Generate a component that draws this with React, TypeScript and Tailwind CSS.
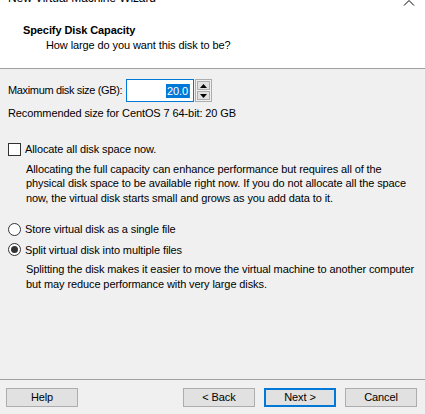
import React from 'react';

const font = "font-['Liberation_Sans','DejaVu_Sans',sans-serif]";

const WinButton = ({ label, focused }: { label: string; focused?: boolean }) => (
  <div
    className={`w-[72px] h-[19px] flex items-center justify-center bg-[#e1e1e1] text-[11px] text-black ${
      focused ? 'border-2 border-[#0078d7]' : 'border border-[#adadad]'
    }`}
  >
    {label}
  </div>
);

const Radio = ({ checked }: { checked?: boolean }) => (
  <div className="w-[13px] h-[13px] rounded-full border border-[#333] bg-white flex items-center justify-center shrink-0">
    {checked && <div className="w-[7px] h-[7px] rounded-full bg-[#333]" />}
  </div>
);

export default function App() {
  return (
    <div
      className={`w-[425px] h-[414px] bg-[#f0f0f0] flex flex-col text-[11px] tracking-[-0.1px] text-black overflow-hidden ${font}`}
    >
      {/* header */}
      <div className="bg-white h-[69px] border-b border-[#a0a0a0] flex flex-col shrink-0">
        <div className="h-[8px] flex justify-between overflow-hidden">
          <div className="pl-[8px] text-[12px] leading-[16px] mt-[-10px] whitespace-nowrap">New Virtual Machine Wizard</div>
          <svg width="12" height="8" viewBox="0 0 12 8" className="mr-[10px] mt-[-1px]">
            <path d="M1 6.5 L6 1.5 L11 6.5" stroke="#000" strokeWidth="1" fill="none" />
          </svg>
        </div>
        <div className="pl-[23px] pt-[15px] font-bold leading-[14px]">Specify Disk Capacity</div>
        <div className="pl-[46px] pt-[1px] leading-[14px]">How large do you want this disk to be?</div>
      </div>

      {/* body */}
      <div className="flex flex-col pl-[8px] pt-[10px]">
        <div className="flex items-center h-[23px]">
          <span className="w-[118px] shrink-0 whitespace-nowrap tracking-[-0.35px]">Maximum disk size (GB):</span>
          <div className="w-[68px] h-[23px] border border-[#0078d7] bg-white flex items-center justify-end pr-[3px]">
            <span className="bg-[#0078d7] text-white leading-[14px] px-[1px]">20.0</span>
            <span className="w-[1px] h-[14px] bg-[#c06000]" />
          </div>
          <div className="flex flex-col gap-[1px] ml-[1px] h-[23px] w-[17px] border border-[#adadad] bg-[#f0f0f0] p-[1px]">
            <div className="flex-1 bg-[#e1e1e1] border border-[#adadad] flex items-center justify-center">
              <svg width="7" height="4" viewBox="0 0 7 4"><path d="M0 4 L3.5 0 L7 4 Z" fill="#000" /></svg>
            </div>
            <div className="flex-1 bg-[#e1e1e1] border border-[#adadad] flex items-center justify-center">
              <svg width="7" height="4" viewBox="0 0 7 4"><path d="M0 0 L3.5 4 L7 0 Z" fill="#000" /></svg>
            </div>
          </div>
        </div>
        <div className="mt-[4px] leading-[14px]">Recommended size for CentOS 7 64-bit: 20 GB</div>

        <div className="flex items-center gap-[4px] mt-[21px]">
          <div className="w-[13px] h-[13px] border border-[#333] bg-white shrink-0" />
          <span>Allocate all disk space now.</span>
        </div>
        <div className="pl-[18px] mt-[4px] leading-[14.5px] w-[412px]">
          Allocating the full capacity can enhance performance but requires all of the physical disk space to be
          available right now. If you do not allocate all the space now, the virtual disk starts small and grows as
          you add data to it.
        </div>

        <div className="flex items-center gap-[4px] mt-[16px]">
          <Radio />
          <span>Store virtual disk as a single file</span>
        </div>
        <div className="flex items-center gap-[4px] mt-[4px]">
          <Radio checked />
          <span>Split virtual disk into multiple files</span>
        </div>
        <div className="pl-[18px] mt-[4px] leading-[14.5px] w-[414px]">
          Splitting the disk makes it easier to move the virtual machine to another computer but may reduce
          performance with very large disks.
        </div>
      </div>

      <div className="flex-1" />

      {/* footer */}
      <div className="border-t border-[#a0a0a0] h-[35px] flex items-start pt-[8px] px-[6px] shrink-0">
        <WinButton label="Help" />
        <div className="flex-1" />
        <div className="flex gap-[9px] mr-[2px]">
          <WinButton label="< Back" />
          <WinButton label="Next >" focused />
          <WinButton label="Cancel" />
        </div>
      </div>
    </div>
  );
}
